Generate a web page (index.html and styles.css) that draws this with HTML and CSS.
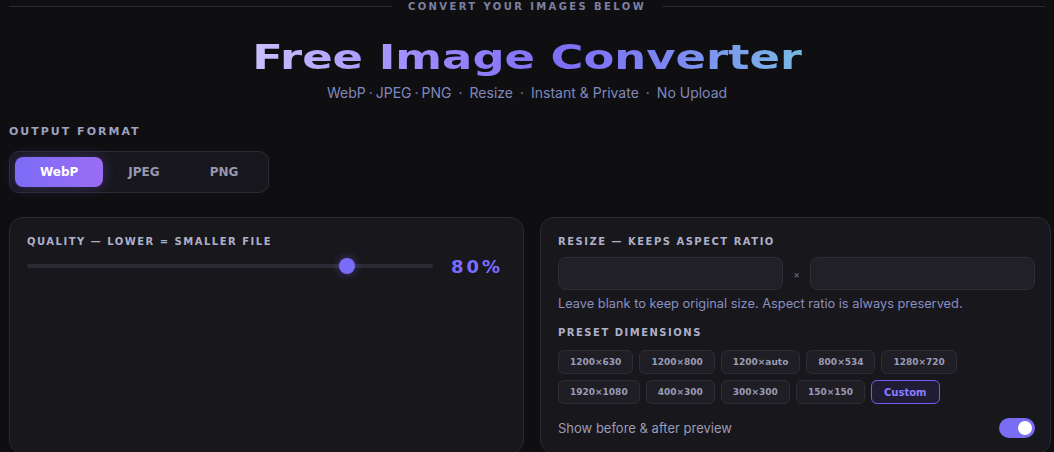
FILE: index.html
```html
<!DOCTYPE html>
<html lang="en">
<head>
<meta charset="utf-8">
<title>Free Image Converter</title>
<link rel="stylesheet" href="styles.css">
</head>
<body>
<div class="page">
  <div class="divider">
    <span class="divider-line"></span>
    <span class="divider-text">CONVERT YOUR IMAGES BELOW</span>
    <span class="divider-line"></span>
  </div>

  <header class="hero">
    <h1 class="title"><span class="title-inner">Free Image Converter</span></h1>
    <p class="subtitle">WebP<span class="dot-tight">·</span>JPEG<span class="dot-tight">·</span>PNG<span class="dot">·</span>Resize<span class="dot">·</span>Instant &amp; Private<span class="dot">·</span>No Upload</p>
  </header>

  <section class="format">
    <div class="label label-lg">OUTPUT FORMAT</div>
    <div class="seg">
      <button class="seg-btn active">WebP</button>
      <button class="seg-btn">JPEG</button>
      <button class="seg-btn">PNG</button>
    </div>
  </section>

  <div class="cards">
    <div class="card">
      <div class="label">QUALITY — LOWER = SMALLER FILE</div>
      <div class="slider-row">
        <div class="track"><span class="thumb"></span></div>
        <span class="pct">80%</span>
      </div>
    </div>

    <div class="card card-right">
      <div class="label">RESIZE — KEEPS ASPECT RATIO</div>
      <div class="inputs">
        <div class="input"></div>
        <span class="times">×</span>
        <div class="input"></div>
      </div>
      <p class="help">Leave blank to keep original size. Aspect ratio is always preserved.</p>
      <div class="label label-preset">PRESET DIMENSIONS</div>
      <div class="presets">
        <span class="chip">1200×630</span>
        <span class="chip">1200×800</span>
        <span class="chip">1200×auto</span>
        <span class="chip">800×534</span>
        <span class="chip">1280×720</span>
        <span class="chip">1920×1080</span>
        <span class="chip">400×300</span>
        <span class="chip">300×300</span>
        <span class="chip">150×150</span>
        <span class="chip chip-custom">Custom</span>
      </div>
      <div class="toggle-row">
        <span class="toggle-label">Show before &amp; after preview</span>
        <span class="toggle"><span class="knob"></span></span>
      </div>
    </div>
  </div>
</div>
</body>
</html>
```

FILE: styles.css
```css
* { box-sizing: border-box; }

html, body {
  margin: 0;
  padding: 0;
  background: #0f0f12;
  color: #9ea1bf;
  font-family: Inter, "Noto Sans", sans-serif;
  overflow: hidden;
}

.page {
  padding: 0 9px;
}

.divider {
  display: flex;
  align-items: center;
  gap: 16px;
  height: 13px;
}

.divider-line {
  flex: 1;
  height: 1px;
  background: #2a2933;
}

.divider-text {
  font-family: "DejaVu Sans", sans-serif;
  font-weight: 700;
  font-size: 10px;
  letter-spacing: 2.4px;
  color: #7d80a0;
  line-height: 12px;
}

.hero {
  text-align: center;
}

.title {
  margin: 25px 0 0;
  font-family: "DejaVu Sans", sans-serif;
  font-weight: 700;
  font-size: 33px;
  line-height: 40px;
  letter-spacing: 0;
}

.title-inner {
  display: inline-block;
  transform: scaleX(1.36);
  background: linear-gradient(90deg, #cbbfff 0%, #9d8cfb 30%, #7f6ef6 55%, #7c84f2 75%, #78b9e6 100%);
  -webkit-background-clip: text;
  background-clip: text;
  color: transparent;
}

.subtitle {
  margin: 6px 0 0;
  font-size: 14px;
  line-height: 18px;
  color: #8088bd;
}

.dot-tight { margin: 0 3px; }
.dot { margin: 0 7px; }

.format {
  margin-top: 24px;
}

.label {
  font-family: "DejaVu Sans", sans-serif;
  font-weight: 700;
  font-size: 10px;
  letter-spacing: 1.5px;
  line-height: 12px;
  color: #aeb0c8;
}

.label-lg {
  font-size: 11px;
  letter-spacing: 2px;
  color: #9ea1bf;
}

.seg {
  display: inline-flex;
  margin-top: 13px;
  padding: 5px;
  border: 1px solid #2c2b35;
  border-radius: 10px;
  background: #18171d;
}

.seg-btn {
  height: 30px;
  padding: 0 25px;
  border: 0;
  border-radius: 8px;
  background: transparent;
  font-family: "DejaVu Sans", sans-serif;
  font-weight: 700;
  font-size: 12px;
  color: #9698ae;
  cursor: pointer;
}

.seg-btn.active {
  background: linear-gradient(90deg, #7c6cf6, #9b6cf6);
  color: #ffffff;
  box-shadow: 0 0 14px rgba(124, 108, 246, 0.3);
}

.cards {
  display: grid;
  grid-template-columns: 515px 511px;
  gap: 16px;
  margin-top: 24px;
}

.card {
  background: #18171c;
  border: 1px solid #2b2a33;
  border-radius: 14px;
  padding: 18px 17px 13px;
  height: 237px;
}

.card-right {
  padding-right: 15px;
}

.slider-row {
  display: flex;
  align-items: center;
  margin-top: 8px;
  height: 20px;
}

.track {
  position: relative;
  width: 406px;
  height: 4px;
  border-radius: 2px;
  background: #2c2b34;
}

.thumb {
  position: absolute;
  left: 312px;
  top: -6px;
  width: 16px;
  height: 16px;
  border-radius: 50%;
  background: #7a6cf7;
  box-shadow: 0 0 10px rgba(122, 108, 247, 0.45);
}

.pct {
  margin-left: 18px;
  font-family: "DejaVu Sans", sans-serif;
  font-weight: 700;
  font-size: 18px;
  letter-spacing: 3px;
  color: #7b6cff;
}

.inputs {
  display: flex;
  align-items: center;
  margin-top: 9px;
}

.input {
  flex: 1;
  height: 33px;
  border: 1px solid #2e2d36;
  border-radius: 8px;
  background: #212026;
}

.times {
  width: 27px;
  text-align: center;
  font-size: 10px;
  color: #6f7188;
}

.help {
  margin: 6px 0 0;
  font-size: 12.8px;
  line-height: 15px;
  color: #8a8fc0;
}

.label-preset {
  margin-top: 16px;
}

.presets {
  display: flex;
  flex-wrap: wrap;
  gap: 6px 6px;
  margin-top: 11px;
  max-width: 410px;
}

.chip {
  display: inline-flex;
  align-items: center;
  height: 24px;
  padding: 0 11px;
  border: 1px solid #2e2d36;
  border-radius: 6px;
  background: #1f1e24;
  font-family: "DejaVu Sans", sans-serif;
  font-weight: 700;
  font-size: 9px;
  color: #9a9cb5;
}

.chip-custom {
  padding: 0 12px;
  border-color: #6d5df0;
  background: #1f1c34;
  color: #8b7cff;
  font-size: 10px;
}

.toggle-row {
  display: flex;
  align-items: center;
  justify-content: space-between;
  margin-top: 14px;
}

.toggle-label {
  font-size: 13px;
  color: #9a9cb5;
}

.toggle {
  display: flex;
  align-items: center;
  justify-content: flex-end;
  width: 36px;
  height: 20px;
  padding: 0 3px;
  border-radius: 10px;
  background: #7b6cf5;
}

.knob {
  width: 14px;
  height: 14px;
  border-radius: 50%;
  background: #ffffff;
}
```
